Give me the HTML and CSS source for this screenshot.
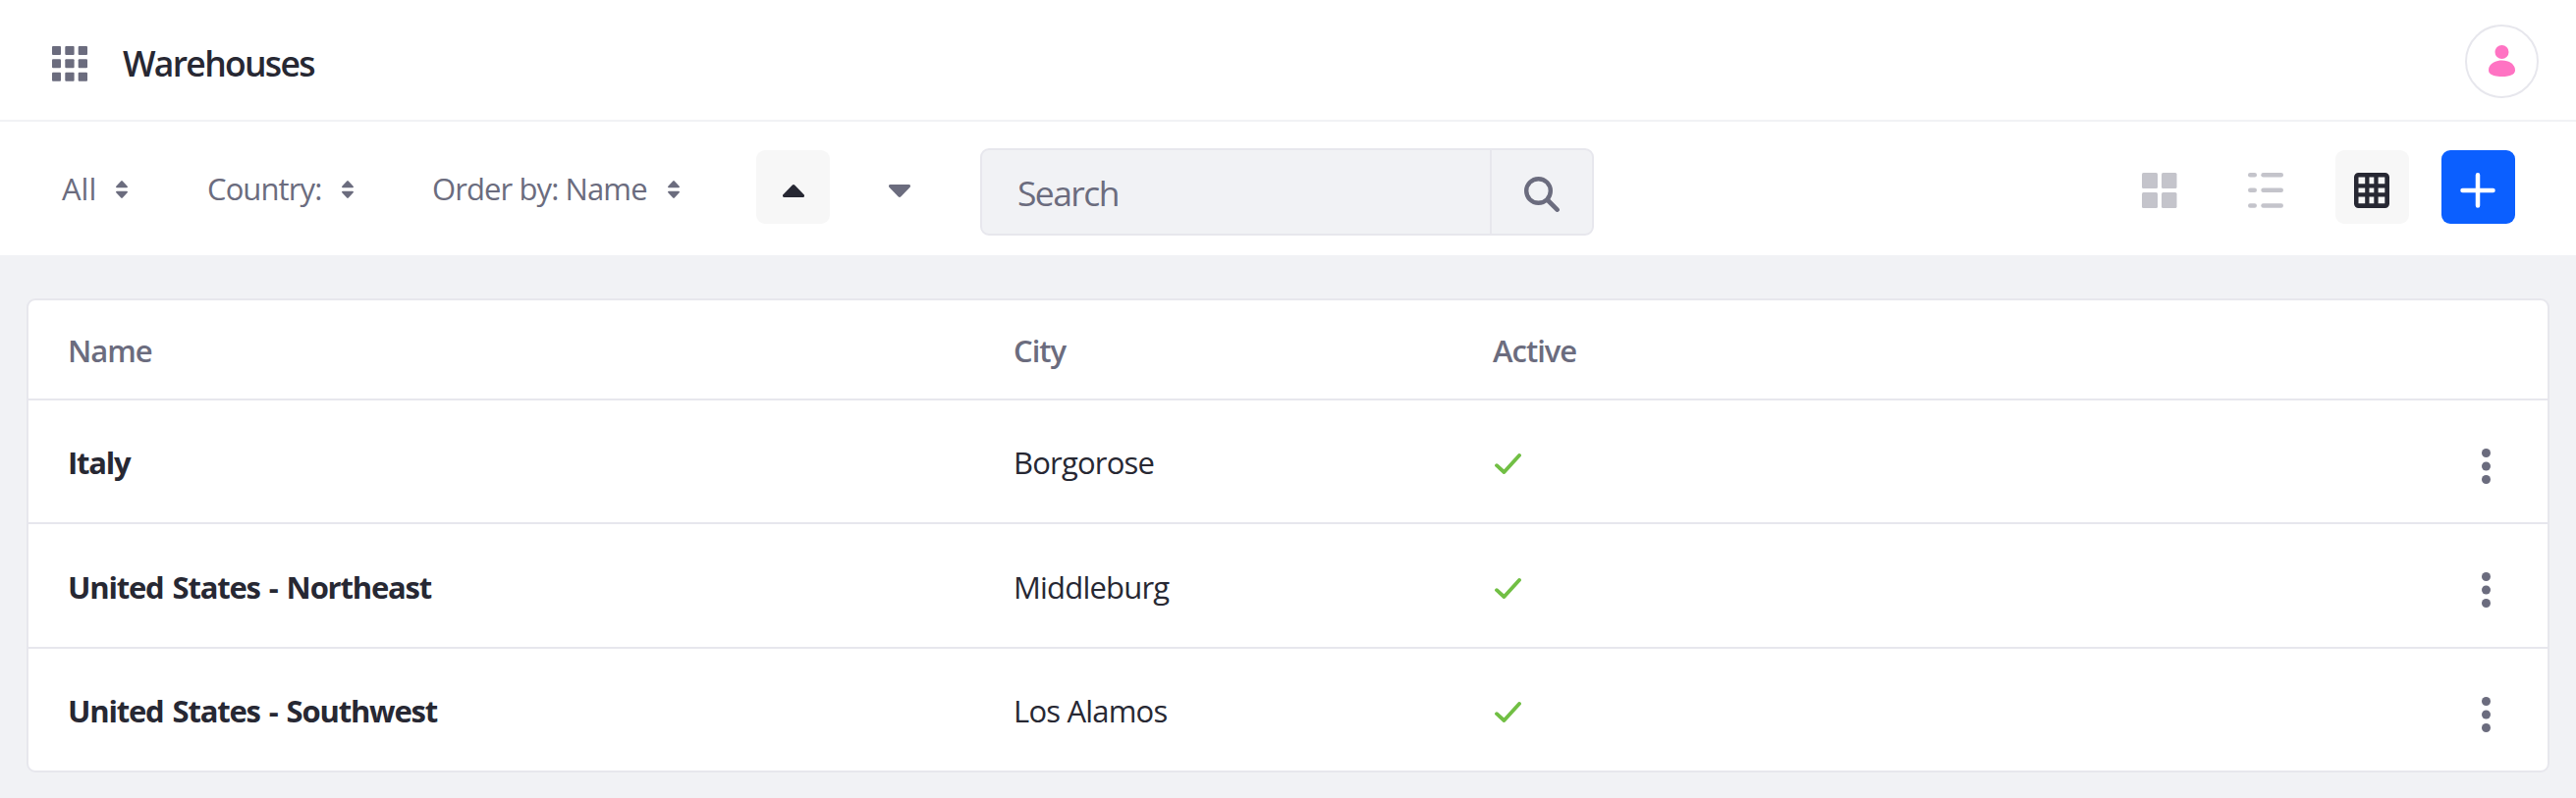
FILE: index.html
```html
<!DOCTYPE html>
<html lang="en">
<head>
<meta charset="utf-8">
<title>Warehouses</title>
<link rel="stylesheet" href="styles.css">
</head>
<body>
<svg class="sprite" aria-hidden="true">
  <symbol id="caret-double" viewBox="0 0 12 18">
    <path d="M5.2.5a1.1 1.1 0 0 1 1.6 0l4.900 5.200c.600.800.200 1.500-.700 1.500H1C.100 7.200-.300 6.500.300 5.700zM5.200 17.500a1.100 1.100 0 0 0 1.600 0l4.900-5.200c.600-.800.200-1.500-.700-1.500H1c-.900 0-1.300.700-.700 1.500z"/>
  </symbol>
  <symbol id="check" viewBox="0 0 27 21">
    <path d="M2 12.200 9.500 19 25 2" fill="none" stroke="#71bf44" stroke-width="3.800" stroke-linecap="round" stroke-linejoin="round"/>
  </symbol>
  <symbol id="dots" viewBox="0 0 9 36">
    <circle cx="4.500" cy="4.500" r="4.500"/><circle cx="4.500" cy="18" r="4.500"/><circle cx="4.500" cy="31.500" r="4.500"/>
  </symbol>
</svg>

<header class="topbar">
  <svg class="apps" viewBox="0 0 36 36">
    <rect width="9" height="9" rx="1"/><rect x="13.300" width="9.300" height="9" rx="1"/><rect x="26.700" width="9.300" height="9" rx="1"/>
    <rect y="13.300" width="9" height="9" rx="1"/><rect x="13.300" y="13.300" width="9.300" height="9" rx="1"/><rect x="26.700" y="13.300" width="9.300" height="9" rx="1"/>
    <rect y="26.700" width="9" height="9" rx="1"/><rect x="13.300" y="26.700" width="9.300" height="9" rx="1"/><rect x="26.700" y="26.700" width="9.300" height="9" rx="1"/>
  </svg>
  <h1 class="title">Warehouses</h1>
  <div class="avatar">
    <svg class="person" viewBox="0 0 27 32">
      <circle cx="13.500" cy="7" r="7"/>
      <path d="M13.500 15.500C21 15.500 27 19.500 27 25.500c0 4-4.500 6.500-13.500 6.500S0 29.500 0 25.500c0-6 6-10 13.500-10z"/>
    </svg>
  </div>
</header>

<nav class="toolbar">
  <div class="filter filter-all"><span>All</span><svg class="sort"><use href="#caret-double"/></svg></div>
  <div class="filter filter-country"><span>Country:</span><svg class="sort"><use href="#caret-double"/></svg></div>
  <div class="filter filter-order"><span>Order by: Name</span><svg class="sort"><use href="#caret-double"/></svg></div>
  <button class="btn btn-active"><svg class="caret" viewBox="0 0 22 13"><path d="M9.600.700a2 2 0 0 1 2.800 0l9.200 9.600c1 1.200.400 2.700-1.200 2.700H1.600C0 13-.600 11.500.400 10.300z"/></svg></button>
  <button class="btn btn-down"><svg class="caret" viewBox="0 0 22 13"><path d="M9.600 12.300a2 2 0 0 0 2.800 0l9.200-9.600C22.600 1.500 22 0 20.400 0H1.600C0 0-.600 1.500.400 2.700z"/></svg></button>
  <div class="search">
    <span class="search-input">Search</span>
    <span class="search-btn">
      <svg class="icon" viewBox="0 0 36 36"><circle cx="14.500" cy="14.500" r="12.300" fill="none" stroke="#6b6c7e" stroke-width="4.400"/><path d="m24 24 9.600 9.600" stroke="#6b6c7e" stroke-width="4.600" stroke-linecap="round"/></svg>
    </span>
  </div>
  <div class="views">
    <button class="btn"><svg class="icon" viewBox="0 0 36 36"><rect width="16" height="16" rx="1.500"/><rect x="20" width="15.500" height="16" rx="1.500"/><rect y="20" width="16" height="16" rx="1.500"/><rect x="20" y="20" width="15.500" height="16" rx="1.500"/></svg></button>
    <button class="btn"><svg class="icon" viewBox="0 0 36 36"><rect width="9" height="4.500" rx="2.250"/><rect x="13.300" width="22.700" height="4.500" rx="2.250"/><rect y="15.500" width="9" height="4.500" rx="2.250"/><rect x="13.300" y="15.500" width="22.700" height="4.500" rx="2.250"/><rect y="31.200" width="9" height="4.500" rx="2.250"/><rect x="13.300" y="31.200" width="22.700" height="4.500" rx="2.250"/></svg></button>
    <button class="btn btn-active"><svg class="icon" viewBox="0 0 36 36"><path fill-rule="evenodd" d="M4.500 0h27A4.500 4.500 0 0 1 36 4.500v27a4.500 4.500 0 0 1-4.500 4.500h-27A4.500 4.500 0 0 1 0 31.500v-27A4.500 4.500 0 0 1 4.500 0zM4.500 4.500V11.200H11.200V4.500zM15.500 4.500V11.200H20.300V4.500zM24.600 4.500V11.200H31.300V4.500zM4.500 15.500V20.300H11.200V15.500zM15.500 15.500V20.300H20.300V15.500zM24.600 15.500V20.300H31.300V15.500zM4.500 24.500V31.300H11.200V24.500zM15.500 24.500V31.300H20.300V24.500zM24.600 24.500V31.300H31.300V24.500z"/></svg></button>
    <button class="btn btn-add"><svg class="icon" viewBox="0 0 36 36"><path d="M18 2.300v31.200M2.500 18h31" stroke="#fff" stroke-width="4.500" stroke-linecap="round"/></svg></button>
  </div>
</nav>

<main class="content">
  <div class="table">
    <div class="row head"><span>Name</span><span>City</span><span>Active</span></div>
    <div class="row"><span class="name">Italy</span><span>Borgorose</span><svg class="check"><use href="#check"/></svg><svg class="dots"><use href="#dots"/></svg></div>
    <div class="row row-mid"><span class="name">United States - Northeast</span><span>Middleburg</span><svg class="check"><use href="#check"/></svg><svg class="dots"><use href="#dots"/></svg></div>
    <div class="row"><span class="name">United States - Southwest</span><span>Los Alamos</span><svg class="check"><use href="#check"/></svg><svg class="dots"><use href="#dots"/></svg></div>
  </div>
</main>
</body>
</html>
```
FILE: styles.css
```css
* { box-sizing: border-box; }
body {
  margin: 0;
  min-height: 813px;
  background: #f1f2f5;
  color: #272833;
  font-family: "Open Sans", "Noto Sans", sans-serif;
  font-size: 31px;
  line-height: 46px;
  letter-spacing: -0.8px;
  white-space: nowrap;
}
svg { display: block; flex: none; fill: currentColor; }
.sprite { position: absolute; width: 0; height: 0; }

.topbar {
  display: flex;
  align-items: center;
  height: 124px;
  padding: 0 38px 0 53px;
  background: #fff;
  border-bottom: 2px solid #f1f2f5;
}
.apps { width: 36px; height: 36px; margin-top: 8px; color: #6b6c7e; }
.title { margin: 5px 0 0 36px; font-size: 35.5px; font-weight: 600; letter-spacing: -1.7px; }
.avatar {
  display: flex;
  align-items: center;
  justify-content: center;
  width: 75px;
  height: 75px;
  margin: 3px 0 0 auto;
  border: 2px solid #e7e7ed;
  border-radius: 50%;
  color: #ff73c3;
}
.person { width: 27px; height: 32px; margin-bottom: 2px; }

.toolbar {
  display: flex;
  align-items: center;
  height: 136px;
  padding: 0 62px;
  background: #fff;
  color: #6b6c7e;
}
.filter { display: flex; align-items: center; justify-content: space-between; letter-spacing: -0.9px; }
.filter-all { width: 67px; margin-left: 1px; letter-spacing: 0; }
.filter-country { width: 149px; margin-left: 81px; }
.filter-order { width: 252px; margin-left: 80px; }
.sort { width: 12px; height: 18px; margin-top: 1px; }
.btn {
  display: flex;
  align-items: center;
  justify-content: center;
  width: 75px;
  height: 75px;
  margin: -3px 0 0;
  padding: 7px 0 0;
  border: 0;
  border-radius: 9px;
  background: none;
  color: #6b6c7e;
}
.btn-active { background: #f7f7f7; color: #272833; }
.filter-order + .btn { margin-left: 78px; }
.btn-down { margin-left: 33px; }
.caret { width: 22px; height: 13px; margin-top: 1px; }
.icon { width: 36px; height: 36px; }
.search {
  display: flex;
  width: 625px;
  height: 89px;
  margin: 7px 0 0 45px;
  border: 2px solid #e7e7ed;
  border-radius: 9px;
  background: #f1f2f5;
  font-size: 35.5px;
  letter-spacing: -1.6px;
}
.search-input { flex: 1; padding: 20px 0 0 36px; }
.search-btn {
  display: flex;
  align-items: center;
  justify-content: center;
  width: 104px;
  padding-top: 4px;
  border-left: 2px solid #e7e7ed;
}
.views { display: flex; gap: 33px; margin-left: auto; }
.views .btn { padding-right: 1px; color: #c4c4cb; }
.views .btn-active { color: #272833; }
.views .btn-add { background: #0b5fff; color: #fff; }

.content { padding: 44px 27px 26px; }
.table {
  border: 2px solid #e7e7ed;
  border-radius: 9px;
  background: #fff;
}
.row {
  display: grid;
  grid-template-columns: 963px 488px 1fr 9px;
  align-items: center;
  height: 126px;
  padding: 2px 58px 0 40px;
  border-bottom: 2px solid #e7e7ed;
}
.row-mid { height: 127px; }
.row:last-child { height: 124px; border-bottom: 0; }
.head { height: 102px; color: #6b6c7e; font-weight: 600; letter-spacing: -1px; }
.name { font-weight: 700; letter-spacing: -1.2px; word-spacing: 2.2px; }
.check { width: 27px; height: 21px; margin: 3px 0 0 2px; }
.dots { width: 9px; height: 36px; margin-top: 7px; color: #6b6c7e; }
```
